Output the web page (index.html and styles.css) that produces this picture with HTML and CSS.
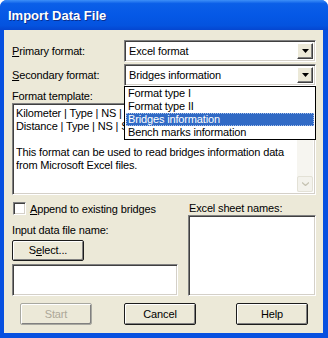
FILE: index.html
```html
<!DOCTYPE html>
<html>
<head>
<meta charset="utf-8">
<link rel="stylesheet" href="styles.css">
</head>
<body>
<div class="window">
  <div class="titlebar"><span class="title">Import Data File</span></div>
  <div class="client">
    <div class="formrow">
      <div class="lbl"><u>P</u>rimary format:</div>
      <div class="combo">
        <span class="combo-text">Excel format</span>
        <span class="combo-btn"><svg width="7" height="4" viewBox="0 0 7 4"><path d="M0 0h7L3.5 4z" fill="#000"/></svg></span>
      </div>
    </div>
    <div class="formrow second">
      <div class="lbl"><u>S</u>econdary format:</div>
      <div class="combo">
        <span class="combo-text">Bridges information</span>
        <span class="combo-btn"><svg width="7" height="4" viewBox="0 0 7 4"><path d="M0 0h7L3.5 4z" fill="#000"/></svg></span>
        <div class="droplist">
          <div class="item">Format type I</div>
          <div class="item">Format type II</div>
          <div class="item sel">Bridges information</div>
          <div class="item">Bench marks information</div>
        </div>
      </div>
    </div>
    <div class="tpl-label">Format template:</div>
    <div class="textarea">
      <div class="ta-text">
        <div>Kilometer | Type | NS | S</div>
        <div>Distance | Type | NS | S</div>
        <div>&nbsp;</div>
        <div>This format can be used to read bridges information data</div>
        <div>from Microsoft Excel files.</div>
      </div>
      <div class="vscroll">
        <div class="sb-track"></div>
        <div class="sb-btn"><svg width="7" height="4" viewBox="0 0 7 4"><path d="M0 0.5l3.5 3 3.5-3" fill="none" stroke="#c5c2b2" stroke-width="1.3"/></svg></div>
      </div>
    </div>
    <div class="lower">
      <div class="left-col">
        <div class="check"><span class="checkbox"></span><span><u>A</u>ppend to existing bridges</span></div>
        <div class="input-label">Input data file name:</div>
        <div class="btn select-btn">S<u>e</u>lect...</div>
        <div class="field filebox"></div>
      </div>
      <div class="right-col">
        <div class="sheet-label">Excel sheet names:</div>
        <div class="field sheetbox"></div>
      </div>
    </div>
    <div class="buttons">
      <div class="btn action disabled">Start</div>
      <div class="btn action cancel">Cancel</div>
      <div class="btn action help">Help</div>
    </div>
  </div>
</div>
</body>
</html>
```

FILE: styles.css
```css
html, body {
  margin: 0;
  padding: 0;
  background: #ffffff;
}
body {
  font-family: "Liberation Sans", Arial, sans-serif;
  font-size: 11px;
  letter-spacing: -0.15px;
  color: #000;
}
.window {
  width: 328px;
  height: 338px;
  background: #0750e0;
  border-radius: 7px 7px 0 0;
  display: flex;
  flex-direction: column;
  overflow: hidden;
}
.titlebar {
  height: 30px;
  flex: none;
  display: flex;
  align-items: center;
  padding-left: 8px;
  background: linear-gradient(#3d8ff8 0%, #0b5fe8 12%, #0558e6 50%, #0453df 85%, #0546d0 100%);
}
.title {
  color: #fff;
  font-family: "Liberation Sans", Arial, sans-serif;
  font-weight: bold;
  font-size: 13px;
  letter-spacing: 0;
  text-shadow: 1px 1px #0a2f8f;
  margin-top: 1px;
}
.client {
  flex: 1;
  margin: 0 5px 5px 4px;
  background: #ece9d8;
  padding: 10px 7px 0 8px;
  display: flex;
  flex-direction: column;
  position: relative;
}
.formrow {
  display: flex;
  align-items: center;
  height: 22px;
}
.formrow.second {
  margin-top: 2px;
}
.lbl {
  width: 112px;
}
.combo {
  position: relative;
  width: 192px;
  height: 22px;
  box-sizing: border-box;
  background: #fff;
  border: 1px solid;
  border-color: #808080 #ffffff #ffffff #808080;
  box-shadow: inset 1px 1px #404040, inset -1px -1px #d4d0c8;
  display: flex;
  align-items: center;
  padding: 0 2px 0 4px;
}
.combo-text {
  flex: 1;
}
.combo-btn {
  width: 16px;
  height: 16px;
  box-sizing: border-box;
  background: #ece9d8;
  border: 1px solid;
  border-color: #ffffff #404040 #404040 #ffffff;
  box-shadow: inset -1px -1px #808080;
  display: flex;
  align-items: center;
  justify-content: center;
}
.droplist {
  position: absolute;
  left: -1px;
  top: 21px;
  width: 192px;
  box-sizing: border-box;
  background: #fff;
  border: 1px solid #000;
  padding: 0 1px;
  z-index: 5;
}
.item {
  height: 13px;
  line-height: 13px;
  padding-left: 2px;
}
.item.sel {
  background: #316ac5;
  color: #fff;
  outline: 1px dotted #a8c0e8;
  outline-offset: -1px;
}
.tpl-label {
  margin-top: 3px;
  height: 14px;
  line-height: 14px;
}
.textarea {
  width: 304px;
  height: 92px;
  box-sizing: border-box;
  background: #fff;
  border: 1px solid;
  border-color: #808080 #ffffff #ffffff #808080;
  box-shadow: inset 1px 1px #404040, inset -1px -1px #d4d0c8;
  display: flex;
  padding: 2px 2px 2px 3px;
}
.ta-text {
  flex: 1;
  line-height: 13px;
  white-space: nowrap;
  overflow: hidden;
  padding-top: 1px;
}
.vscroll {
  width: 16px;
  flex: none;
  display: flex;
  flex-direction: column;
  background: #f6f5f0;
}
.sb-track {
  flex: 1;
}
.sb-btn {
  height: 16px;
  box-sizing: border-box;
  border: 1px solid #e3e1d6;
  border-radius: 2px;
  background: #f3f2ec;
  display: flex;
  align-items: center;
  justify-content: center;
}
.lower {
  margin-top: 7px;
  display: flex;
  height: 94px;
}
.left-col {
  width: 166px;
  display: flex;
  flex-direction: column;
}
.check {
  display: flex;
  align-items: center;
  height: 13px;
}
.checkbox {
  width: 13px;
  height: 13px;
  box-sizing: border-box;
  margin-left: 1px;
  margin-right: 4px;
  background: #fff;
  border: 1px solid;
  border-color: #808080 #ffffff #ffffff #808080;
  box-shadow: inset 1px 1px #404040, inset -1px -1px #d4d0c8;
}
.input-label {
  margin-top: 9px;
  height: 13px;
  line-height: 13px;
}
.btn {
  box-sizing: border-box;
  background: #ece9d8;
  border: 1px solid #1c1c1c;
  border-radius: 2px;
  box-shadow: inset 1px 1px #ffffff, inset -1px -1px #808080;
  display: flex;
  align-items: center;
  justify-content: center;
}
.select-btn {
  margin-top: 3px;
  width: 72px;
  height: 21px;
}
.field {
  box-sizing: border-box;
  background: #fff;
  border: 1px solid;
  border-color: #808080 #ffffff #ffffff #808080;
  box-shadow: inset 1px 1px #404040, inset -1px -1px #d4d0c8;
}
.filebox {
  margin-top: 3px;
  width: 166px;
  height: 33px;
}
.right-col {
  margin-left: 10px;
  display: flex;
  flex-direction: column;
}
.sheet-label {
  height: 13px;
  line-height: 12px;
  padding-left: 1px;
}
.sheetbox {
  width: 128px;
  height: 81px;
}
.buttons {
  margin-top: 7px;
  display: flex;
  padding-left: 8px;
}
.action {
  width: 72px;
  height: 22px;
}
.action.disabled {
  color: #aca899;
  border-color: #a8a8a0;
}
.action.cancel {
  margin-left: 32px;
}
.action.help {
  margin-left: 40px;
}
```
